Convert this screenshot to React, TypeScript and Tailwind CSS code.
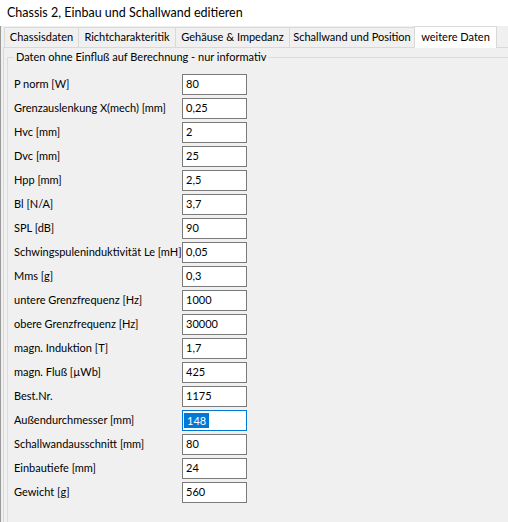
const rows: [string, string][] = [
  ["P norm [W]", "80"],
  ["Grenzauslenkung X(mech) [mm]", "0,25"],
  ["Hvc [mm]", "2"],
  ["Dvc [mm]", "25"],
  ["Hpp [mm]", "2,5"],
  ["Bl [N/A]", "3,7"],
  ["SPL [dB]", "90"],
  ["Schwingspuleninduktivität Le [mH]", "0,05"],
  ["Mms [g]", "0,3"],
  ["untere Grenzfrequenz [Hz]", "1000"],
  ["obere Grenzfrequenz [Hz]", "30000"],
  ["magn. Induktion [T]", "1,7"],
  ["magn. Fluß [µWb]", "425"],
  ["Best.Nr.", "1175"],
  ["Außendurchmesser [mm]", "148"],
  ["Schallwandausschnitt [mm]", "80"],
  ["Einbautiefe [mm]", "24"],
  ["Gewicht [g]", "560"],
];

const tabs = [
  { label: "Chassisdaten", w: "w-[75px]" },
  { label: "Richtcharakteritik", w: "w-[98px]" },
  { label: "Gehäuse & Impedanz", w: "w-[115px]" },
  { label: "Schallwand und Position", w: "w-[126px]" },
];

export default function App() {
  const focused = "Außendurchmesser [mm]";

  return (
    <div className="w-[508px] h-[522px] overflow-hidden bg-[#f0f0f0] text-[11px] text-black font-['Lato',sans-serif] flex flex-col">
      {/* window caption */}
      <div className="h-[26px] shrink-0 bg-white flex items-center pl-[7px] text-[12.5px]">
        Chassis 2, Einbau und Schallwand editieren
      </div>

      <div className="flex flex-1 min-h-0">
        <div className="w-px bg-[#9a9a9a] shrink-0" />
        <div className="w-[2px] shrink-0" />

        {/* tab control */}
        <div className="flex-1 flex flex-col min-w-0">
          <div className="h-[21px] shrink-0 flex items-end pl-px">
            {tabs.map((t) => (
              <div
                key={t.label}
                className={`${t.w} h-[20px] shrink-0 border border-b-0 border-[#d9d9d9] -ml-px first:ml-0 flex items-center justify-center whitespace-nowrap`}
              >
                {t.label}
              </div>
            ))}
            <div className="w-[83px] h-[22px] shrink-0 -ml-px -mb-px bg-white border border-b-0 border-[#d9d9d9] flex items-start justify-center pt-[2px] whitespace-nowrap relative z-10">
              weitere Daten
            </div>
          </div>

          <div className="flex-1 border-t border-l border-[#d9d9d9] pl-[3px] pt-px min-h-0">
            <fieldset className="w-[560px] h-[520px] border border-[#dcdcdc] pl-[6px]">
              <legend className="px-[2px] leading-[16px]">
                Daten ohne Einfluß auf Berechnung - nur informativ
              </legend>
              <div className="flex flex-col gap-[3px] pt-[9px]">
                {rows.map(([label, value]) => {
                  const active = label === focused;
                  return (
                    <div key={label} className="flex items-center h-[21px]">
                      <div className="w-[168px] shrink-0 whitespace-nowrap">{label}</div>
                      <div
                        className={`w-[65px] h-[21px] border bg-white flex items-center pl-px ${
                          active ? "border-[#0078d7]" : "border-[#7a7a7a]"
                        }`}
                      >
                        {active ? (
                          <span className="bg-[#0078d7] text-white px-[3px] leading-[15px]">{value}</span>
                        ) : (
                          <span className="pl-[2px]">{value}</span>
                        )}
                      </div>
                    </div>
                  );
                })}
              </div>
            </fieldset>
          </div>
        </div>
      </div>
    </div>
  );
}
